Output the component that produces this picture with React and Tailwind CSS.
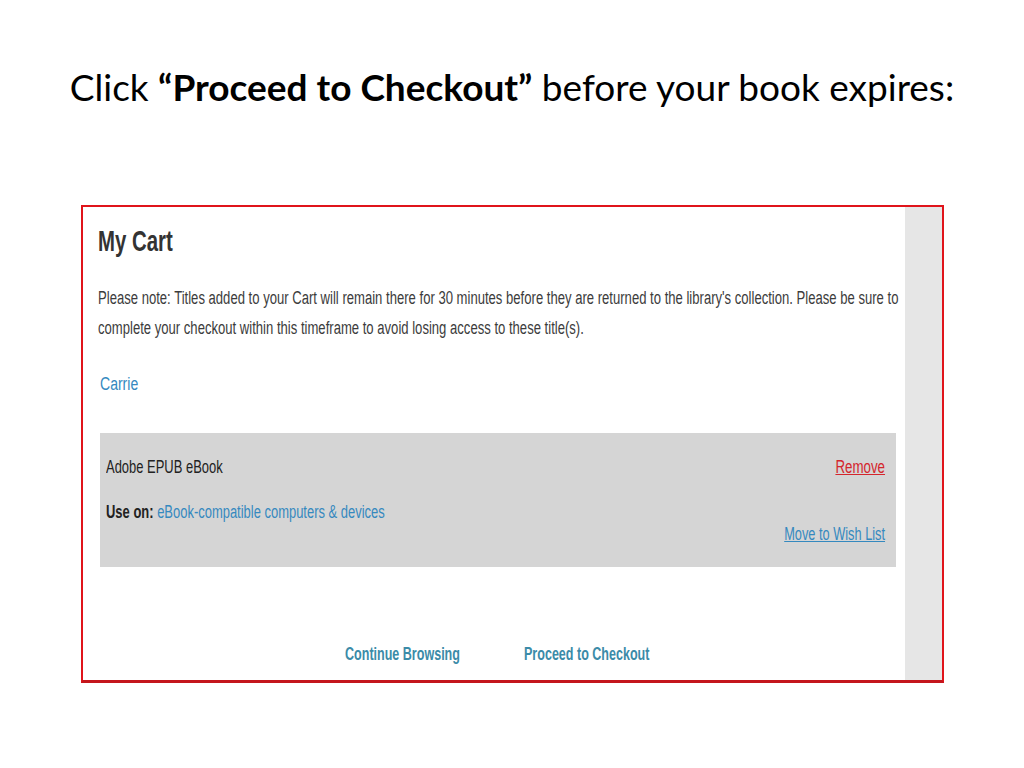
function S({ className, children }) {
  return <span className={"inline-block whitespace-nowrap " + className}>{children}</span>;
}

export default function App() {
  const arial = { fontFamily: '"Liberation Sans", Arial, sans-serif' };
  return (
    <div className="w-[1024px] h-[768px] bg-white flex flex-col items-center overflow-hidden">
      <h1 className="mt-[65px] text-[37px] leading-[44px] text-black whitespace-nowrap" style={{ fontFamily: 'Lato, "Open Sans", sans-serif' }}>
        Click <b>“Proceed to Checkout”</b> before your book expires:
      </h1>
      <div className="mt-[96px] ml-[1px] w-[863px] h-[478px] border-2 border-[#e0141b] border-b-[3px] border-b-[#c4161c] flex overflow-hidden" style={arial}>
        <div className="flex-1 bg-white flex flex-col pl-[15px] pr-[8px] overflow-hidden">
          <div className="mt-[16px] h-[36px] text-[30px] leading-[36px] font-bold text-[#333]">
            <S className="origin-left scale-x-[0.68]">My Cart</S>
          </div>
          <div className="mt-[24px] h-[60px] text-[18px] leading-[30px] text-[#3c3c3c]">
            <div className="w-[1200px] origin-left scale-x-[0.727] whitespace-nowrap">
              Please note: Titles added to your Cart will remain there for 30 minutes before they are returned to the library's collection. Please be sure to
              <br />
              complete your checkout within this timeframe to avoid losing access to these title(s).
            </div>
          </div>
          <div className="mt-[29px] h-[24px] pl-[2px] text-[18px] leading-[24px] text-[#3589bf]">
            <S className="origin-left scale-x-[0.78]">Carrie</S>
          </div>
          <div className="mt-[37px] ml-[2px] w-[796px] h-[134px] bg-[#d5d5d5] flex justify-between px-[6px]">
            <div className="flex flex-col">
              <div className="mt-[22px] h-[24px] text-[18px] leading-[24px] text-[#222]">
                <S className="origin-left scale-x-[0.72]">Adobe EPUB eBook</S>
              </div>
              <div className="mt-[21px] h-[24px] text-[18px] leading-[24px] text-[#222]">
                <S className="origin-left scale-x-[0.72]">
                  <span className="font-bold">Use on: </span>
                  <span className="text-[#3589bf]">eBook-compatible computers &amp; devices</span>
                </S>
              </div>
            </div>
            <div className="flex flex-col items-end pr-[5px]">
              <div className="mt-[22px] h-[24px] text-[18px] leading-[24px] text-[#d4262c]">
                <S className="origin-right scale-x-[0.74] underline">Remove</S>
              </div>
              <div className="mt-[43px] h-[24px] text-[18px] leading-[24px] text-[#3589bf]">
                <S className="origin-right scale-x-[0.71] underline">Move to Wish List</S>
              </div>
            </div>
          </div>
          <div className="mt-[75px] h-[24px] ml-[247px] flex gap-[65px] text-[19px] leading-[24px] font-bold text-[#3b8ba8]">
            <div className="w-[114px]">
              <S className="origin-left scale-x-[0.66]">Continue Browsing</S>
            </div>
            <div className="w-[126px]">
              <S className="origin-left scale-x-[0.66]">Proceed to Checkout</S>
            </div>
          </div>
        </div>
        <div className="w-[37px] bg-[#e6e6e6]"></div>
      </div>
    </div>
  );
}
